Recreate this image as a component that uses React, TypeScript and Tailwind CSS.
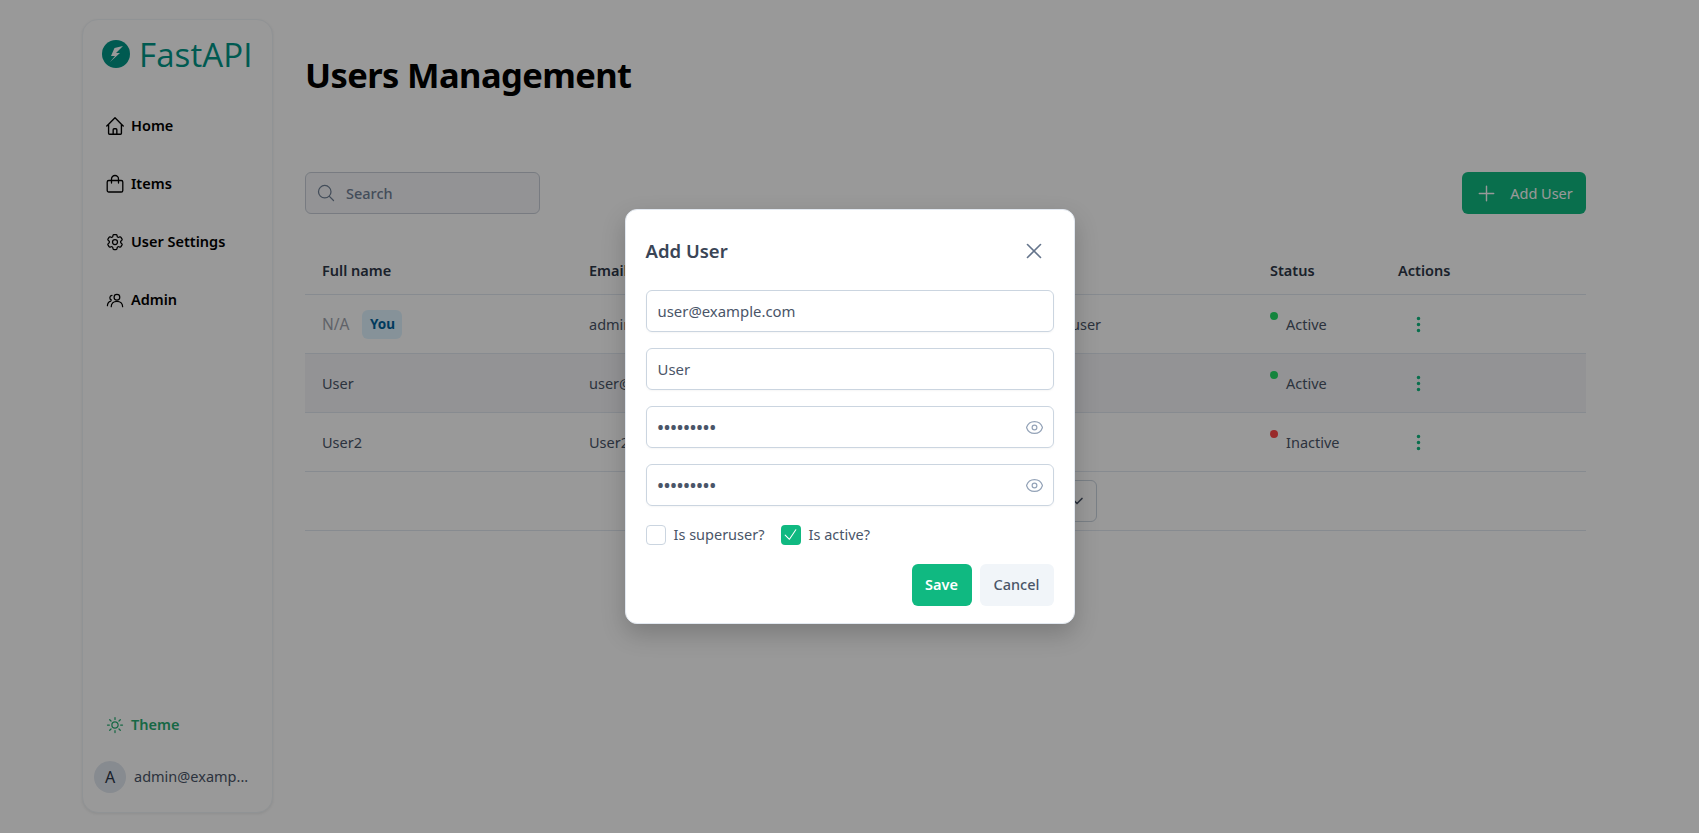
import React from "react";
import {
  HiOutlineCog6Tooth,
  HiOutlineSun,
  HiOutlineMagnifyingGlass,
  HiOutlinePlus,
  HiOutlineXMark,
  HiOutlineEye,
  HiOutlineCheck,
} from "react-icons/hi2";
import { BsThreeDotsVertical } from "react-icons/bs";
import { LuChevronDown } from "react-icons/lu";

function HomeIcon({ className }: { className?: string }) {
  return (
    <svg viewBox="0 0 24 24" fill="none" stroke="currentColor" strokeWidth="1.5" strokeLinecap="round" strokeLinejoin="round" className={className}>
      <path d="M3 12l2-2m0 0l7-7 7 7M5 10v10a1 1 0 001 1h3m10-11l2 2m-2-2v10a1 1 0 01-1 1h-3m-6 0a1 1 0 001-1v-4a1 1 0 011-1h2a1 1 0 011 1v4a1 1 0 001 1m-6 0h6" />
    </svg>
  );
}

function BagIcon({ className }: { className?: string }) {
  return (
    <svg viewBox="0 0 20 20" fill="none" stroke="currentColor" strokeWidth="1.3" strokeLinejoin="round" strokeLinecap="round" className={className}>
      <rect x="2.2" y="6.5" width="15.6" height="11.5" rx="1.6" />
      <path d="M6.5 9V5a3.5 3.5 0 0 1 7 0v4" />
    </svg>
  );
}

function AdminIcon({ className }: { className?: string }) {
  return (
    <svg viewBox="0 0 20 20" fill="none" stroke="currentColor" strokeWidth="1.3" strokeLinecap="round" strokeLinejoin="round" className={className}>
      <circle cx="11.5" cy="6.5" r="3" />
      <path d="M5.5 16.5c0-3.4 2.6-5.6 6-5.6s6 2.2 6 5.6" />
      <path d="M6.3 4.6a2.6 2.6 0 0 0-.6 5" />
      <path d="M1.5 15.5c0-2.5 1.3-4.2 3.5-4.9" />
    </svg>
  );
}

const nav = [
  { label: "Home", Icon: HomeIcon, size: "h-[22px] w-[22px] shrink-0" },
  { label: "Items", Icon: BagIcon, size: "h-[20px] w-[20px] shrink-0" },
  { label: "User Settings", Icon: HiOutlineCog6Tooth, size: "h-[20px] w-[20px] shrink-0" },
  { label: "Admin", Icon: AdminIcon, size: "h-[19px] w-[19px] shrink-0" },
];

const rows = [
  { name: "N/A", you: true, email: "admin@example.com", role: "Superuser", active: true, hover: false },
  { name: "User", you: false, email: "user@example.com", role: "User", active: true, hover: true },
  { name: "User2", you: false, email: "User2@example.com", role: "User", active: false, hover: false },
];

function Field({ value, secret }: { value: string; secret?: boolean }) {
  return (
    <div className="flex h-[42px] items-center justify-between rounded-md border border-[#cbd5e0] pl-[11px] pr-[9px] shadow-[0_1px_2px_rgba(0,0,0,0.04)]">
      <span className={secret ? "text-[16px] font-bold tracking-[0.5px] text-[#4a5568]" : "text-[14.9px] text-[#4a5568]"}>{value}</span>
      {secret && <HiOutlineEye className="h-[19px] w-[19px] text-[#94a3b8]" />}
    </div>
  );
}

export default function App() {
  return (
    <div className="relative flex h-[833px] w-full overflow-hidden bg-white font-['Noto_Sans',sans-serif] text-[14.5px] text-[#4a5568]">
      <aside className="ml-[82px] mt-[19px] flex h-[794px] w-[191px] shrink-0 flex-col rounded-2xl border border-[#f1f5f9] bg-white shadow-[0_1px_3px_rgba(0,0,0,0.08)]">
        <div className="ml-[19px] mt-[20px] flex h-[28px] items-center gap-[9px]">
          <svg viewBox="0 0 28 28" className="h-[28px] w-[28px] shrink-0">
            <circle cx="14" cy="14" r="14" fill="#009688" />
            <path d="M21 6 L12.5 8 L9 16 H13 L8 22 L18 13 H14 Z" fill="#ffffff" />
          </svg>
          <span className="font-['Open_Sans',sans-serif] text-[33px] font-medium leading-none tracking-[0.1px] text-[#009688]">FastAPI</span>
        </div>
        <nav className="ml-[22px] mt-[29px] flex flex-col">
          {nav.map(({ label, Icon, size }) => (
            <div key={label} className="flex h-[58px] items-center gap-[6px] font-semibold text-black">
              <div className="flex w-[20px] justify-center">
                <Icon className={size} />
              </div>
              <span>{label}</span>
            </div>
          ))}
        </nav>
        <div className="mt-auto ml-[22px] flex h-[30px] items-center gap-[6px] font-semibold text-[#27ae73]">
          <HiOutlineSun className="h-[20px] w-[20px]" />
          <span>Theme</span>
        </div>
        <div className="ml-[11px] mt-[21px] mb-[19px] flex items-center gap-[8px]">
          <div className="flex h-[32px] w-[32px] items-center justify-center rounded-full bg-[#e2e8f0] text-[16px] text-[#2d3748]">A</div>
          <span className="text-[#4a5568]">admin@examp...</span>
        </div>
      </aside>

      <main className="ml-[32px] w-[1281px] shrink-0">
        <h1 className="mt-[49px] h-[52px] text-[34.5px] font-bold leading-[52px] tracking-[-0.6px] text-black">Users Management</h1>
        <div className="mt-[71px] flex items-start justify-between">
          <div className="flex h-[42px] w-[235px] items-center gap-[10px] rounded-md border border-[#c8ced8] bg-[#f5f6f8] pl-[10px]">
            <HiOutlineMagnifyingGlass className="h-[20px] w-[20px] text-[#718096]" />
            <span className="pt-[1px] font-medium text-[#718096]">Search</span>
          </div>
          <div className="flex h-[42px] w-[124px] items-center justify-center gap-[12px] rounded-md bg-[#10b981] text-white">
            <HiOutlinePlus className="h-[23px] w-[23px]" />
            <span className="pt-[1px]">Add User</span>
          </div>
        </div>
        <table className="mt-[34px] w-full table-fixed border-collapse">
          <colgroup>
            <col className="w-[267px]" />
            <col className="w-[442px]" />
            <col className="w-[239px]" />
            <col className="w-[128px]" />
            <col />
          </colgroup>
          <thead>
            <tr className="h-[46px] border-b border-[#e2e8f0] text-left">
              {["Full name", "Email", "Role", "Status", "Actions"].map((h) => (
                <th key={h} className="pl-[16px] pr-[16px] font-semibold text-[#2d3748]">
                  <span className="ml-[1px]">{h}</span>
                </th>
              ))}
            </tr>
          </thead>
          <tbody>
            {rows.map((r) => (
              <tr key={r.name} className={r.hover ? "h-[59px] border-b border-[#e2e8f0] bg-[#f5f6f8]" : "h-[59px] border-b border-[#e2e8f0]"}>
                <td className="px-[17px] pt-[2px]">
                  <div className="flex items-center gap-[13px]">
                    <span className={r.you ? "text-[15.5px] text-[#a0a4ae]" : ""}>{r.name}</span>
                    {r.you && (
                      <span className="flex h-[29px] w-[40px] items-center justify-center rounded-md bg-[#e0f4ff] text-[13.5px] font-bold text-[#00639c]">You</span>
                    )}
                  </div>
                </td>
                <td className="px-[17px] pt-[2px]">{r.email}</td>
                <td className="px-[17px] pt-[2px]">{r.role}</td>
                <td className="px-[17px] pt-[2px]">
                  <div className="flex items-start gap-[8px]">
                    <span className={r.active ? "mt-[-2px] h-[8px] w-[8px] rounded-full bg-[#22dd66]" : "mt-[-2px] h-[8px] w-[8px] rounded-full bg-[#ff4646]"} />
                    <span>{r.active ? "Active" : "Inactive"}</span>
                  </div>
                </td>
                <td className="px-[17px] pt-[2px]">
                  <BsThreeDotsVertical className="ml-[11px] h-[19px] w-[19px] text-[#10b981]" />
                </td>
              </tr>
            ))}
          </tbody>
        </table>
        <div className="flex h-[59px] items-center justify-center border-b border-[#e2e8f0]">
          <div className="flex h-[42px] w-[303px] items-center justify-end rounded-md border border-[#cbd5e0] pr-[9px]">
            <LuChevronDown className="h-[20px] w-[20px] text-[#4a5568]" />
          </div>
        </div>
      </main>

      <div className="absolute inset-0 flex items-center justify-center bg-black/40">
        <div className="flex h-[415px] w-[450px] flex-col rounded-xl border border-[#e2e8f0] bg-white px-[20px] shadow-[0_10px_25px_rgba(0,0,0,0.2)]">
          <div className="flex items-center justify-between pb-[23px] pt-[25px]">
            <span className="text-[18.5px] font-semibold leading-[32px] text-[#3a4556]">Add User</span>
            <HiOutlineXMark className="mr-[7px] h-[26px] w-[26px] text-[#64748b]" />
          </div>
          <div className="flex flex-col gap-[16px]">
            <Field value="user@example.com" />
            <Field value="User" />
            <Field value="•••••••••" secret />
            <Field value="•••••••••" secret />
          </div>
          <div className="mt-[18px] flex items-center text-[#4a5568]">
            <span className="h-[20px] w-[20px] rounded-[4px] border border-[#cbd5e0]" />
            <span className="ml-[8px]">Is superuser?</span>
            <span className="ml-[16px] flex h-[20px] w-[20px] items-center justify-center rounded-[4px] bg-[#10b981] text-white">
              <HiOutlineCheck className="h-[17px] w-[17px]" />
            </span>
            <span className="ml-[8px]">Is active?</span>
          </div>
          <div className="mt-[18px] flex justify-end gap-[8px] font-semibold">
            <div className="flex h-[42px] w-[60px] items-center justify-center rounded-md bg-[#10b981] text-white">Save</div>
            <div className="flex h-[42px] w-[74px] items-center justify-center rounded-md bg-[#f1f5f9] font-medium text-[#4a5568]">Cancel</div>
          </div>
        </div>
      </div>
    </div>
  );
}
